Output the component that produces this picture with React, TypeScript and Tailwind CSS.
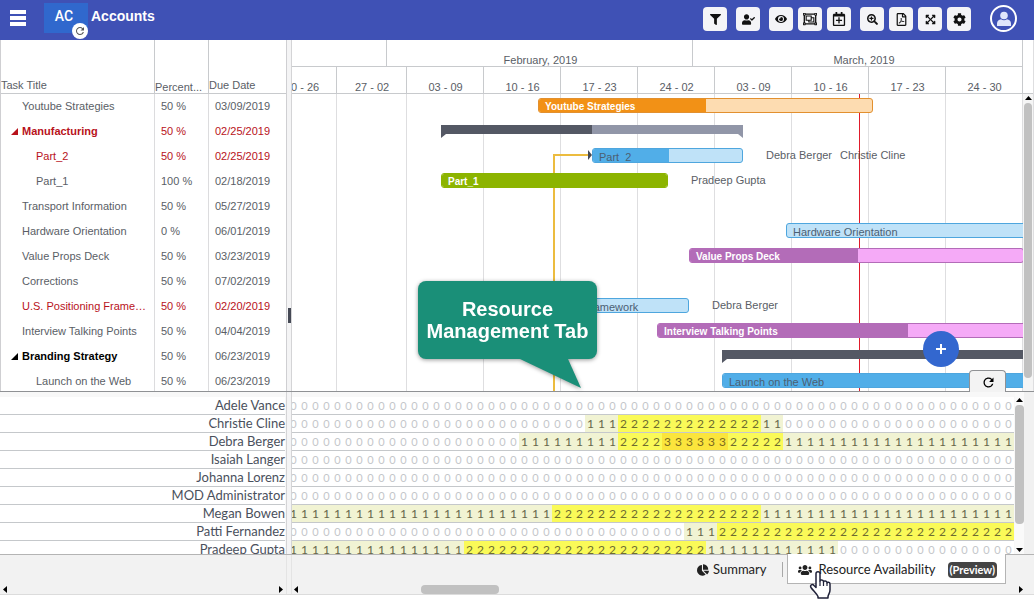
import { clsx } from "clsx";
import {
  FaChartPie,
  FaCog,
  FaExpandArrowsAlt,
  FaEye,
  FaFilter,
  FaRegCalendarPlus,
  FaRegFilePdf,
  FaRegObjectGroup,
  FaSearchPlus,
  FaUserCheck,
  FaUsers,
} from "react-icons/fa";
import { MdRefresh } from "react-icons/md";

const toolbarGroups = [
  [{ icon: FaFilter, label: "Filter", size: 11 }],
  [{ icon: FaUserCheck, label: "Assigned to me", size: 13 }],
  [
    { icon: FaEye, label: "View", size: 12 },
    { icon: FaRegObjectGroup, label: "Group", size: 14 },
    { icon: FaRegCalendarPlus, label: "Add event", size: 14 },
  ],
  [
    { icon: FaSearchPlus, label: "Zoom in", size: 11 },
    { icon: FaRegFilePdf, label: "Export PDF", size: 13 },
    { icon: FaExpandArrowsAlt, label: "Full screen", size: 11 },
    { icon: FaCog, label: "Settings", size: 13 },
  ],
];

type BarKind = "orange" | "blue" | "green" | "purple" | "summary";

interface Task {
  title: string;
  percent: string;
  due: string;
  child?: boolean;
  parent?: boolean;
  late?: boolean;
  bar?: { kind: BarKind; start: number; width: number; done: number; label?: string };
  people?: string[];
}

// start / width / done are pixels on the timeline, 11px per day
const tasks: Task[] = [
  {
    title: "Youtube Strategies",
    percent: "50 %",
    due: "03/09/2019",
    bar: { kind: "orange", start: 278, width: 335, done: 167, label: "Youtube Strategies" },
  },
  {
    title: "Manufacturing",
    percent: "50 %",
    due: "02/25/2019",
    parent: true,
    late: true,
    bar: { kind: "summary", start: 181, width: 302, done: 151 },
  },
  {
    title: "Part_2",
    percent: "50 %",
    due: "02/25/2019",
    child: true,
    late: true,
    bar: { kind: "blue", start: 332, width: 151, done: 76, label: "Part_2" },
    people: ["Debra Berger", "Christie Cline"],
  },
  {
    title: "Part_1",
    percent: "100 %",
    due: "02/18/2019",
    child: true,
    bar: { kind: "green", start: 181, width: 227, done: 227, label: "Part_1" },
    people: ["Pradeep Gupta"],
  },
  { title: "Transport Information", percent: "50 %", due: "05/27/2019" },
  {
    title: "Hardware Orientation",
    percent: "0 %",
    due: "06/01/2019",
    bar: { kind: "blue", start: 526, width: 700, done: 0, label: "Hardware Orientation" },
  },
  {
    title: "Value Props Deck",
    percent: "50 %",
    due: "03/23/2019",
    bar: { kind: "purple", start: 429, width: 335, done: 168, label: "Value Props Deck" },
  },
  { title: "Corrections", percent: "50 %", due: "07/02/2019" },
  {
    title: "U.S. Positioning Framework",
    percent: "50 %",
    due: "02/20/2019",
    late: true,
    bar: { kind: "blue", start: 235, width: 194, done: 97, label: "U.S. Positioning Framework" },
    people: ["Debra Berger"],
  },
  {
    title: "Interview Talking Points",
    percent: "50 %",
    due: "04/04/2019",
    bar: { kind: "purple", start: 397, width: 502, done: 250, label: "Interview Talking Points" },
  },
  {
    title: "Branding Strategy",
    percent: "50 %",
    due: "06/23/2019",
    parent: true,
    bar: { kind: "summary", start: 462, width: 1200, done: 600 },
  },
  {
    title: "Launch on the Web",
    percent: "50 %",
    due: "06/23/2019",
    child: true,
    bar: { kind: "blue", start: 462, width: 1200, done: 600, label: "Launch on the Web" },
  },
];

const months = [
  { label: "", width: 127 },
  { label: "February, 2019", width: 306 },
  { label: "March, 2019", width: 341 },
];

const weeks = [
  { label: "20 - 26", width: 77 },
  { label: "27 - 02", width: 70 },
  { label: "03 - 09", width: 77 },
  { label: "10 - 16", width: 77 },
  { label: "17 - 23", width: 77 },
  { label: "24 - 02", width: 77 },
  { label: "03 - 09", width: 77 },
  { label: "10 - 16", width: 77 },
  { label: "17 - 23", width: 77 },
  { label: "24 - 30", width: 77 },
];

// each pair is [number of days, tasks on each of them]
const resources: { name: string; load: [number, number][] }[] = [
  { name: "Adele Vance", load: [[66, 0]] },
  { name: "Christie Cline", load: [[27, 0], [3, 1], [13, 2], [2, 1], [21, 0]] },
  { name: "Debra Berger", load: [[21, 0], [9, 1], [4, 2], [6, 3], [5, 2], [21, 1]] },
  { name: "Isaiah Langer", load: [[66, 0]] },
  { name: "Johanna Lorenz", load: [[66, 0]] },
  { name: "MOD Administrator", load: [[66, 0]] },
  { name: "Megan Bowen", load: [[24, 1], [19, 2], [23, 1]] },
  { name: "Patti Fernandez", load: [[36, 0], [3, 1], [27, 2]] },
  { name: "Pradeep Gupta", load: [[16, 1], [22, 2], [12, 1], [16, 0]] },
];

const barStyles: Record<BarKind, { box: string; done: string; text: string }> = {
  orange: { box: "border-[#e2902f] bg-[#fddcb1]", done: "bg-[#f29116]", text: "text-[10px] font-bold text-white" },
  blue: { box: "border-[#4ea6de] bg-[#bfe2f8]", done: "bg-[#51aee8]", text: "text-[#4c6073]" },
  green: { box: "border-[#8cb400] bg-[#8cb400]", done: "bg-[#8cb400]", text: "text-[10px] font-bold text-white" },
  purple: { box: "border-[#b36cb8] bg-[#f5aaf7]", done: "bg-[#b36cb8]", text: "text-[10px] font-bold text-white" },
  summary: { box: "", done: "", text: "" },
};

const loadStyles = [
  "text-[11px] text-[#c4c6ca]",
  "bg-[#f1f3d3] text-xs text-[#66664a]",
  "bg-[#fafa58] text-xs text-[#6f6c30]",
  "bg-[#fbe53c] text-xs text-[#7a6820]",
];

function Arrow({ dir }: { dir: "up" | "down" | "left" | "right" }) {
  const points = {
    up: "1,6 8,6 4.5,2",
    down: "1,3 8,3 4.5,7",
    left: "6,1 6,8 2,4.5",
    right: "3,1 3,8 7,4.5",
  };
  return (
    <svg className="h-[9px] w-[9px] shrink-0" viewBox="0 0 9 9" aria-hidden="true">
      <polygon points={points[dir]} fill="#000" />
    </svg>
  );
}

function Header() {
  return (
    <header className="flex h-10 items-start bg-[#3f51b5] pr-[17px] text-white">
      <button aria-label="Menu" className="ml-2.5 mt-2.5 flex w-4 flex-col gap-0.5">
        <span className="h-1 bg-white" />
        <span className="h-1 bg-white" />
        <span className="h-1 bg-white" />
      </button>
      <div className="relative ml-[18px] mt-[3px] flex h-[30px] w-11 items-center justify-center bg-[#3068cd] pr-1 pb-1 font-['Roboto',sans-serif] text-sm font-medium">
        AC
        <button
          aria-label="Sync"
          className="absolute -bottom-1.5 right-0 flex h-4 w-4 items-center justify-center rounded-full bg-white text-[#555]"
        >
          <MdRefresh size={12} />
        </button>
      </div>
      <h1 className="ml-[3px] mt-1.5 text-sm font-bold">Accounts</h1>
      <div className="ml-auto mt-[7px] flex gap-[9px]">
        {toolbarGroups.map((group, i) => (
          <div key={i} className="flex gap-[5px]">
            {group.map((item) => (
              <button
                key={item.label}
                aria-label={item.label}
                className="flex h-6 w-6 items-center justify-center rounded bg-[#f4f4f7] text-[#111]"
              >
                <item.icon size={item.size} />
              </button>
            ))}
          </div>
        ))}
      </div>
      <button
        aria-label="Profile"
        className="ml-[19px] mt-[5px] flex h-[27px] w-[27px] items-center justify-center rounded-full border-2 border-white"
      >
        <svg className="h-4 w-4" viewBox="0 0 16 16" fill="#dfe5fa" aria-hidden="true">
          <circle cx="8" cy="4.500" r="3.800" />
          <path d="M1 15V12.500C1 10 3 8.500 5 8.300C6.500 9.500 9.500 9.500 11 8.300C13 8.500 15 10 15 12.500V15Z" />
        </svg>
      </button>
    </header>
  );
}

function TaskTable() {
  return (
    <div className="h-[351px] w-[287px] shrink-0 overflow-hidden border-x border-[#cfcfd2]">
      <table className="w-full table-fixed border-separate border-spacing-0 text-left text-[11px] leading-[13px] text-[#5a5e66]">
        <colgroup>
          <col className="w-[154px]" />
          <col className="w-[54px]" />
          <col />
        </colgroup>
        <thead>
          <tr className="h-[54px] align-bottom leading-[11px]">
            <th className="border-r border-b border-[#c8cacd] p-0 pb-0.5 font-normal">Task Title</th>
            <th className="border-r border-b border-[#c8cacd] p-0 font-normal">Percent...</th>
            <th className="border-b border-[#c8cacd] p-0 pb-0.5 font-normal">Due Date</th>
          </tr>
        </thead>
        <tbody>
          {tasks.map((task) => (
            <tr key={task.title} className={clsx("h-[25px]", task.late && "text-[#b8121b]")}>
              <td
                className={clsx(
                  "truncate border-r border-[#dcdcde] py-0 pr-1",
                  task.parent ? "pl-2.5" : task.child ? "pl-[35px]" : "pl-[21px]"
                )}
              >
                {task.parent ? (
                  <span className={clsx("flex items-center gap-1 font-bold", !task.late && "text-black")}>
                    <svg className="h-[7px] w-[7px]" viewBox="0 0 7 7" aria-hidden="true">
                      <polygon points="7,0 7,7 0,7" fill="currentColor" />
                    </svg>
                    {task.title}
                  </span>
                ) : (
                  task.title
                )}
              </td>
              <td className="border-r border-[#dcdcde] py-0 pr-0 pl-1.5">{task.percent}</td>
              <td className="py-0 pr-0 pl-1.5">{task.due}</td>
            </tr>
          ))}
        </tbody>
      </table>
    </div>
  );
}

function Bar({ bar }: { bar: NonNullable<Task["bar"]> }) {
  const style = barStyles[bar.kind];
  if (bar.kind === "summary") {
    return (
      <div className="absolute top-[6px] h-[13px]" style={{ left: bar.start, width: bar.width }}>
        <div className="flex h-[9px] bg-[#9196a8]">
          <div className="bg-[#545864]" style={{ width: bar.done }} />
        </div>
        <div className="flex justify-between">
          <svg className="h-1 w-[5px]" viewBox="0 0 5 4">
            <polygon points="0,0 5,0 0,4" fill="#545864" />
          </svg>
          <svg className="h-1 w-[5px]" viewBox="0 0 5 4">
            <polygon points="0,0 5,0 5,4" fill="#9196a8" />
          </svg>
        </div>
      </div>
    );
  }
  return (
    <div
      className={clsx("absolute top-1 h-[15px] overflow-hidden rounded-[3px] border", style.box)}
      style={{ left: bar.start, width: bar.width }}
    >
      <div className={clsx("h-full", style.done)} style={{ width: bar.done }} />
      <span className={clsx("absolute left-1.5 top-px whitespace-nowrap leading-[14px]", style.text)}>{bar.label}</span>
    </div>
  );
}

function Chart() {
  return (
    <div className="relative h-[351px] min-w-0 flex-1 overflow-hidden text-[11px] text-[#5a5e66]">
      <div className="h-[54px] overflow-hidden border-r border-[#c8cacd] leading-[11px]">
        <div className="-ml-8 flex h-[27px] w-max">
          {months.map((month) => (
            <div
              key={month.label}
              className="flex items-end justify-center border-b border-r border-[#c8cacd] pl-0.5"
              style={{ width: month.width }}
            >
              {month.label}
            </div>
          ))}
        </div>
        <div className="-ml-8 flex h-[27px] w-max">
          {weeks.map((week, i) => (
            <div
              key={i}
              className="flex items-end justify-center border-b border-r border-[#c8cacd] pl-px first:pl-2"
              style={{ width: week.width }}
            >
              {week.label}
            </div>
          ))}
        </div>
      </div>
      <div className="relative -ml-8">
        <div className="absolute inset-0 flex">
          {weeks.map((week, i) => (
            <div key={i} className="shrink-0 border-r border-[#dedee0]" style={{ width: week.width }} />
          ))}
        </div>
        {/* today */}
        <div className="absolute inset-y-0 w-px bg-[#e01b2b]" style={{ left: 599 }} />
        {/* dependency into Part_2 */}
        <svg className="absolute h-[300px] w-12" style={{ left: 288 }} viewBox="0 0 48 300" aria-hidden="true">
          <path d="M6 300V61H40" fill="none" stroke="#ecbc3f" strokeWidth="2" />
          <polygon points="40,56 44,61 40,66" fill="#444a55" />
        </svg>
        {tasks.map((task) => (
          <div key={task.title} className="relative h-[25px]">
            {task.bar && <Bar bar={task.bar} />}
            {task.bar && task.people && (
              <div
                className="absolute top-1 flex gap-2 whitespace-nowrap leading-[15px]"
                style={{ left: task.bar.start + task.bar.width + 23 }}
              >
                {task.people.map((person) => (
                  <span key={person}>{person}</span>
                ))}
              </div>
            )}
          </div>
        ))}
      </div>
    </div>
  );
}

function Callout() {
  return (
    <div className="absolute left-[418px] top-[241px] drop-shadow-[0_1px_2px_rgba(0,0,0,0.4)]">
      <p className="flex h-[78px] w-[179px] items-center justify-center rounded-lg bg-[#1a8f78] text-center text-xl font-bold leading-[22px] text-white">
        Resource
        <br />
        Management Tab
      </p>
      <svg className="ml-[102px] h-[30px] w-[62px]" viewBox="0 0 62 30" aria-hidden="true">
        <polygon points="0,0 48,0 61,29" fill="#1a8f78" />
      </svg>
    </div>
  );
}

function Gantt() {
  return (
    <section className="relative flex border-b border-[#8f9194]">
      <TaskTable />
      <div className="flex w-[5px] shrink-0 flex-col items-end justify-end border-r border-[#d4d4d6] bg-[#f4f4f5] pb-[68px]">
        <span className="h-[15px] w-[3px] bg-[#454955]" />
      </div>
      <Chart />
      <div className="flex w-[11px] shrink-0 flex-col items-center border-r border-[#dedee0]">
        <div className="h-[54px] w-full border-b border-[#c8cacd]" />
        <div className="flex w-full flex-1 flex-col items-center bg-[#f5f5f5]">
          <Arrow dir="up" />
          <div className="h-[275px] w-2 rounded bg-[#c1c1c1]" />
        </div>
      </div>
      <Callout />
      <button
        aria-label="Add task"
        className="absolute bottom-6 right-[75px] flex h-9 w-9 items-center justify-center rounded-full bg-[#3367cf] text-white"
      >
        <svg className="h-2.5 w-2.5" viewBox="0 0 10 10" aria-hidden="true">
          <path d="M5 0V10M0 5H10" stroke="currentColor" strokeWidth="2" />
        </svg>
      </button>
      <button
        aria-label="Refresh resources"
        className="absolute -bottom-px right-7 flex h-[22px] w-[37px] items-center justify-center rounded-t-sm border border-b-0 border-[#8f9194] bg-[#f3f3f3] pl-0.5 pt-px text-black"
      >
        <MdRefresh size={15} />
      </button>
    </section>
  );
}

function ResourceGrid() {
  return (
    <section className="flex h-[163px] overflow-hidden border-b border-[#b4b4b4] font-['Lato',sans-serif]">
      <div className="w-[287px] shrink-0 border-r border-[#d4d4d6] bg-[#f8f8f8] pt-[5px]">
        <table className="w-[285px] border-separate border-spacing-0 bg-white text-[13px] leading-[15px] text-[#4a505c]">
          <tbody>
            {resources.map((resource) => (
              <tr key={resource.name} className="h-[18px]">
                <td className="border-b border-[#c5c8cb] p-0 text-right">{resource.name}</td>
              </tr>
            ))}
          </tbody>
        </table>
      </div>
      <div className="w-[5px] shrink-0 border-r border-[#d4d4d6] bg-[#f4f4f5]" />
      <div className="min-w-0 flex-1 overflow-hidden bg-[#f8f8f8] pt-[5px]">
        <table className="-ml-1 w-[726px] table-fixed border-separate border-spacing-0 bg-white">
          <tbody>
            {resources.map((resource) => (
              <tr key={resource.name} aria-label={resource.name} className="h-[18px]">
                {resource.load
                  .flatMap(([days, count]) => Array<number>(days).fill(count))
                  .map((count, day) => (
                    <td
                      key={day}
                      className={clsx("border-b border-b-[#c5c8cb] p-0 text-center", loadStyles[count], "leading-[15px]")}
                    >
                      {count}
                    </td>
                  ))}
              </tr>
            ))}
          </tbody>
        </table>
      </div>
      <div className="flex w-[9px] shrink-0 flex-col items-center bg-[#fafafa] pt-1">
        <Arrow dir="up" />
        <div className="h-[119px] w-[9px] rounded bg-[#c1c1c1]" />
        <div className="mt-auto">
          <Arrow dir="down" />
        </div>
      </div>
      <div className="w-2.5 shrink-0 bg-[#f1f1f1]" />
    </section>
  );
}

function HandCursor() {
  return (
    <svg className="absolute left-5 top-4 h-[30px] w-6" viewBox="0 0 24 30" aria-hidden="true">
      <path
        d="M8 3.500C8 1 12 1 12 3.500V11C12 9.500 15.500 9.500 15.500 11.500V12C15.500 10.500 19 10.500 19 12.500V13C19 11.800 22 12 22 14V20C22 23 20.500 24 20 26.500V28H10V26.500C8.500 23.500 5 20.500 3 17.500C1.500 15 4.500 13.500 6 15.500L8 17.500Z"
        fill="#fff"
        stroke="#1f2138"
        strokeWidth="1.500"
        strokeLinejoin="round"
      />
      <path d="M12 11V16M15.500 12V16M19 13V16" stroke="#1f2138" strokeWidth="1.200" />
    </svg>
  );
}

function Footer() {
  return (
    <footer className="flex h-10 border-b border-[#dcdcdc] bg-[#f2f2f2]">
      <div className="flex w-[287px] shrink-0 items-end justify-between border-r border-[#e4e4e4] px-px">
        <Arrow dir="left" />
        <Arrow dir="right" />
      </div>
      <div className="w-[5px] shrink-0 border-r border-[#e4e4e4]" />
      <div className="flex min-w-0 flex-1 flex-col justify-between">
        <div role="tablist" className="flex h-[29px] justify-end pr-7 font-['Lato',sans-serif] text-[13px] text-[#222]">
          <button role="tab" aria-selected="false" className="flex items-center gap-1 px-4">
            <FaChartPie size={12} />
            Summary
          </button>
          <span className="my-[7px] mr-1 w-px bg-[#a8a8a8]" />
          <button
            role="tab"
            aria-selected="true"
            className="relative -mt-px flex items-center gap-1.5 whitespace-nowrap border border-t-0 border-[#b4b4b4] bg-white pl-2.5 pr-2 pt-0.5"
          >
            <FaUsers size={14} />
            Resource Availability
            <span className="ml-1.5 rounded bg-[#444] px-0.5 text-[11px] font-bold leading-4 text-white">(Preview)</span>
            <HandCursor />
          </button>
        </div>
        <div className="flex items-center pr-[9px]">
          <Arrow dir="left" />
          <div className="ml-[120px] mr-auto h-[9px] w-[78px] rounded bg-[#c1c1c1]" />
          <Arrow dir="right" />
        </div>
      </div>
    </footer>
  );
}

export default function App() {
  return (
    <main className="min-h-screen bg-white font-['Liberation_Sans',Arial,sans-serif]">
      <Header />
      <Gantt />
      <ResourceGrid />
      <Footer />
    </main>
  );
}
